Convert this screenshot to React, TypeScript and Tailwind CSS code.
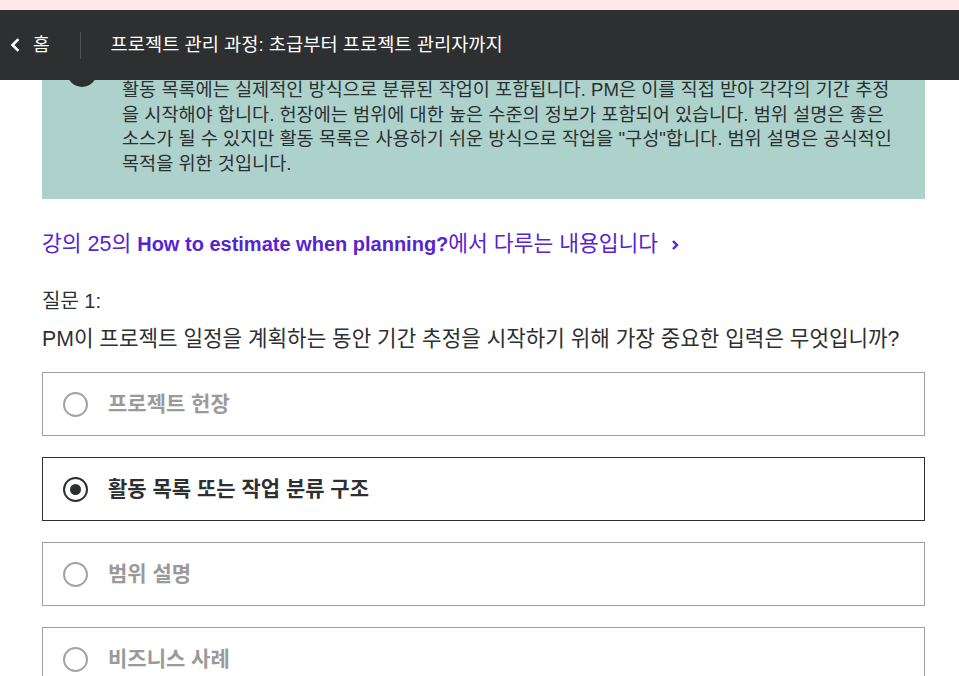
import React from "react";

const font = { fontFamily: '"Liberation Sans", "Noto Sans CJK KR", sans-serif' };

function Radio({ selected }: { selected: boolean }) {
  if (selected) {
    return (
      <span className="flex h-[25px] w-[25px] shrink-0 items-center justify-center rounded-full border-[2.5px] border-[#2d2f31]">
        <span className="h-[11px] w-[11px] rounded-full bg-[#2d2f31]" />
      </span>
    );
  }
  return <span className="h-[25px] w-[25px] shrink-0 rounded-full border-2 border-[#a3a3a3]" />;
}

function Option({ label, selected }: { label: string; selected?: boolean }) {
  return (
    <div
      className={
        "flex h-[64px] items-center gap-[20px] border pl-[20px] " +
        (selected ? "border-[#2d2f31] text-[#2d2f31]" : "border-[#9e9e9e] text-[#9a9a9a]")
      }
    >
      <Radio selected={!!selected} />
      <span className="text-[21px] font-bold">{label}</span>
    </div>
  );
}

export default function App() {
  return (
    <div className="min-h-[676px] w-[959px] overflow-hidden bg-white" style={font}>
      <div className="relative z-10">
        <div className="h-[10px] bg-[#fce8e8]" />
        <header className="flex h-[70px] items-center bg-[#2d2f31] text-white">
          <svg width="12" height="16" viewBox="0 0 12 16" className="ml-[9px]">
            <polyline points="8.5,3 3.5,8 8.5,13" fill="none" stroke="white" strokeWidth="2.6" strokeLinecap="square" />
          </svg>
          <span className="ml-[12px] text-[18px]">홈</span>
          <span className="ml-[30px] h-[27px] w-px bg-[#4f5153]" />
          <span className="ml-[30px] text-[18.7px]">프로젝트 관리 과정: 초급부터 프로젝트 관리자까지</span>
        </header>
      </div>

      <main className="ml-[42px] w-[883px]">
        <div className="flex gap-[25px] bg-[#acd2cb] pb-[23px] pl-[25px] pr-[10px] text-[18.6px] leading-[24.5px] text-[#2d2f31]">
          <span className="-mt-[23px] h-[30px] w-[30px] shrink-0 rounded-full bg-[#2d2f31]" />
          <p className="-mt-[2px] whitespace-nowrap">
            활동 목록에는 실제적인 방식으로 분류된 작업이 포함됩니다. PM은 이를 직접 받아 각각의 기간 추정
            <br />을 시작해야 합니다. 헌장에는 범위에 대한 높은 수준의 정보가 포함되어 있습니다. 범위 설명은 좋은
            <br />소스가 될 수 있지만 활동 목록은 사용하기 쉬운 방식으로 작업을 "구성"합니다. 범위 설명은 공식적인
            <br />목적을 위한 것입니다.
          </p>
        </div>

        <div className="mt-[31px] whitespace-nowrap text-[21.5px] leading-[28px] text-[#5624d0]">
          <span>강의 25의 </span>
          <span className="text-[20px] font-bold">How to estimate when planning?</span>
          <span>에서 다루는 내용입니다</span>
          <svg width="10" height="14" viewBox="0 0 10 14" className="ml-[12px] inline-block align-[-1px]">
            <polyline points="3,3 7,7 3,11" fill="none" stroke="#5624d0" strokeWidth="2.4" />
          </svg>
        </div>

        <div className="mt-[29px] text-[20px] leading-[28px] text-[#2d2f31]">질문 1:</div>
        <div className="mt-[10px] whitespace-nowrap text-[21.25px] leading-[28px] text-[#2d2f31]">
          PM이 프로젝트 일정을 계획하는 동안 기간 추정을 시작하기 위해 가장 중요한 입력은 무엇입니까?
        </div>

        <div className="mt-[19px] flex flex-col gap-[21px]">
          <Option label="프로젝트 헌장" />
          <Option label="활동 목록 또는 작업 분류 구조" selected />
          <Option label="범위 설명" />
          <Option label="비즈니스 사례" />
        </div>
      </main>
    </div>
  );
}
